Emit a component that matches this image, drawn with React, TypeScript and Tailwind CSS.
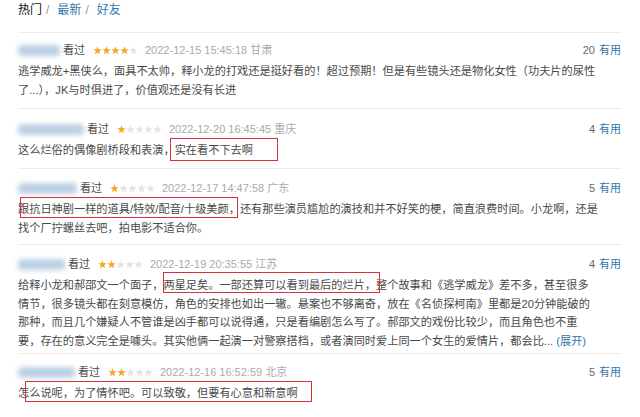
import React from 'react';

interface Review {
  nameW: number;
  stars: number;
  date: string;
  votes: number;
  pad: string;
  lines: React.ReactNode[];
}

const reviews: Review[] = [
  {
    nameW: 42,
    stars: 4,
    date: '2022-12-15 15:45:18 甘肃',
    votes: 20,
    pad: 'pt-[8px] pb-[9px]',
    lines: [
      '逃学威龙+黑侠么，面具不太帅，释小龙的打戏还是挺好看的！超过预期！但是有些镜头还是物化女性（功夫片的尿性',
      '了...），JK与时俱进了，价值观还是没有长进',
    ],
  },
  {
    nameW: 66,
    stars: 1,
    date: '2022-12-20 16:45:45 重庆',
    votes: 4,
    pad: 'pt-[11px] pb-[8px]',
    lines: ['这么烂俗的偶像剧桥段和表演，实在看不下去啊'],
  },
  {
    nameW: 59,
    stars: 1,
    date: '2022-12-17 14:47:58 广东',
    votes: 5,
    pad: 'pt-[10.5px] pb-[7px]',
    lines: [
      '跟抗日神剧一样的道具/特效/配音/十级美颜，还有那些演员尴尬的演技和并不好笑的梗，简直浪费时间。小龙啊，还是',
      '找个厂拧螺丝去吧，拍电影不适合你。',
    ],
  },
  {
    nameW: 47,
    stars: 2,
    date: '2022-12-19 20:35:55 江苏',
    votes: 4,
    pad: 'pt-[10px] pb-[3px]',
    lines: [
      '给释小龙和郝邵文一个面子，两星足矣。一部还算可以看到最后的烂片，整个故事和《逃学威龙》差不多，甚至很多',
      '情节，很多镜头都在刻意模仿，角色的安排也如出一辙。悬案也不够离奇，放在《名侦探柯南》里都是20分钟能破的',
      '那种，而且几个嫌疑人不管谁是凶手都可以说得通，只是看编剧怎么写了。郝邵文的戏份比较少，而且角色也不重',
      <>
        要，存在的意义完全是噱头。其实他俩一起演一对警察搭档，或者演同时爱上同一个女生的爱情片，都会比...{' '}
        <span className="text-[#3377aa]">(展开)</span>
      </>,
    ],
  },
  {
    nameW: 57,
    stars: 2,
    date: '2022-12-16 16:52:59 北京',
    votes: 5,
    pad: 'pt-[9px] pb-[8px]',
    lines: ['怎么说呢，为了情怀吧。可以致敬，但要有心意和新意啊'],
  },
];

const Star = ({ on }: { on: boolean }) => (
  <svg viewBox="0 0 10 10" className="w-[9px] h-[9px]">
    <path
      d="M5 0.4 L6.2 3.6 L9.6 3.7 L6.9 5.8 L7.9 9.2 L5 7.2 L2.1 9.2 L3.1 5.8 L0.4 3.7 L3.8 3.6 Z"
      fill={on ? '#f5a623' : '#e3e3e3'}
    />
  </svg>
);

const marks = [
  'left-[170px] top-[138px] w-[108px] h-[23px]',
  'left-[20px] top-[197px] w-[218px] h-[21px]',
  'left-[163px] top-[272px] w-[217px] h-[21px]',
  'left-[25px] top-[381px] w-[287px] h-[21px]',
];

export default function App() {
  return (
    <div className="relative w-[640px] h-[417px] bg-white overflow-hidden font-['Liberation_Sans','Noto_Sans_CJK_SC',sans-serif] text-[#494949]">
      <div className="px-[18px] w-[603px] box-content">
        <div className="h-[33px] border-b border-[#ececec] text-[12px] leading-[17px] flex items-start pt-[2px] gap-[4px]">
          <span className="text-[#111]">热门</span>
          <span className="text-[#999]">/</span>
          <span className="text-[#3377aa] ml-[4px]">最新</span>
          <span className="text-[#999]">/</span>
          <span className="text-[#3377aa] ml-[4px]">好友</span>
        </div>

        {reviews.map((r, i) => (
          <div
            key={i}
            className={`border-b ${r.pad} ${i === reviews.length - 1 ? 'border-transparent' : 'border-[#ececec]'}`}
          >
            <div className="flex items-center h-[19px] text-[11px]">
              <span className="flex items-center" style={{ width: r.nameW }}>
                <span className="block h-[11px] w-full rounded-sm bg-[#bcd0e4] blur-[2.5px]" />
              </span>
              <span className="ml-[3px]">看过</span>
              <span className="flex ml-[8px] mr-[7px]">
                {[0, 1, 2, 3, 4].map((s) => (
                  <Star key={s} on={s < r.stars} />
                ))}
              </span>
              <span className="text-[#aaaaaa]">{r.date}</span>
              <span className="ml-auto text-[#666]">{r.votes}</span>
              <span className="ml-[4px] text-[#3377aa]">有用</span>
            </div>
            <div className="mt-[2px] text-[11.2px] leading-[18.5px]">
              {r.lines.map((l, j) => (
                <div key={j} className="whitespace-nowrap">
                  {l}
                </div>
              ))}
            </div>
          </div>
        ))}
      </div>

      {marks.map((m, i) => (
        <div key={i} className={`absolute border-solid border-[length:1.5px] border-[color:#d8303c] ${m}`} />
      ))}
    </div>
  );
}
